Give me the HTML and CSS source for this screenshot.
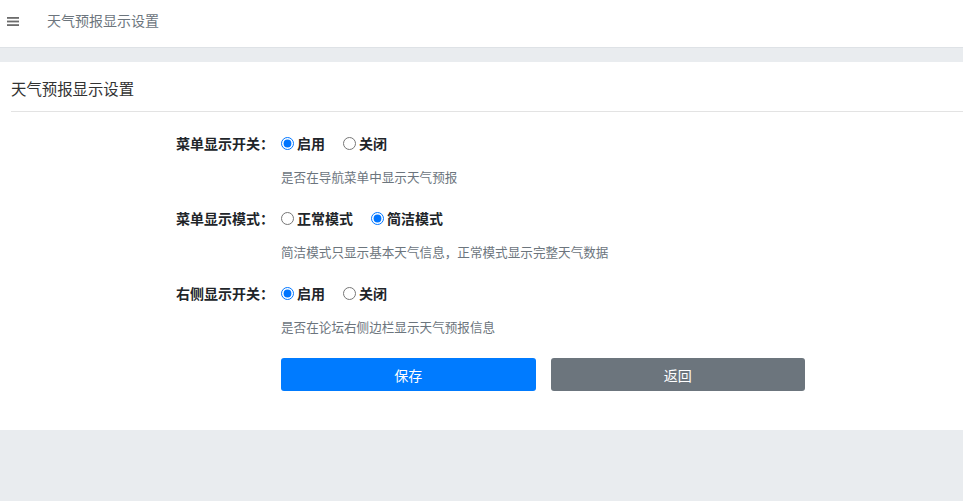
FILE: index.html
```html
<!DOCTYPE html>
<html lang="zh-CN">
<head>
    <meta charset="UTF-8">
    <meta name="viewport" content="width=device-width, initial-scale=1.0">
    <title>天气预报显示设置</title>
    <link rel="stylesheet" href="styles.css">
</head>
<body>
    <div class="top-bar">
        <span class="menu-icon">
            <svg width="12" height="9" viewBox="0 0 12 9">
                <rect x="0" y="0" width="12" height="1.8" fill="#6c6c6c"></rect>
                <rect x="0" y="3.6" width="12" height="1.8" fill="#6c6c6c"></rect>
                <rect x="0" y="7.2" width="12" height="1.8" fill="#6c6c6c"></rect>
            </svg>
        </span>
        <span class="top-title">天气预报显示设置</span>
    </div>

    <div class="card">
        <div class="card-header">天气预报显示设置</div>
        <form class="settings-form">
            <div class="form-row">
                <label class="row-label">菜单显示开关：</label>
                <div class="row-control">
                    <div class="options">
                        <label class="option"><input type="radio" name="menu_show" checked>启用</label>
                        <label class="option"><input type="radio" name="menu_show">关闭</label>
                    </div>
                    <p class="hint">是否在导航菜单中显示天气预报</p>
                </div>
            </div>
            <div class="form-row">
                <label class="row-label">菜单显示模式：</label>
                <div class="row-control">
                    <div class="options">
                        <label class="option"><input type="radio" name="menu_mode">正常模式</label>
                        <label class="option"><input type="radio" name="menu_mode" checked>简洁模式</label>
                    </div>
                    <p class="hint">简洁模式只显示基本天气信息，正常模式显示完整天气数据</p>
                </div>
            </div>
            <div class="form-row">
                <label class="row-label">右侧显示开关：</label>
                <div class="row-control">
                    <div class="options">
                        <label class="option"><input type="radio" name="side_show" checked>启用</label>
                        <label class="option"><input type="radio" name="side_show">关闭</label>
                    </div>
                    <p class="hint">是否在论坛右侧边栏显示天气预报信息</p>
                </div>
            </div>
            <div class="form-row">
                <span class="row-label"></span>
                <div class="buttons">
                    <button type="submit" class="btn btn-save">保存</button>
                    <button type="button" class="btn btn-back">返回</button>
                </div>
            </div>
        </form>
    </div>
</body>
</html>
```

FILE: styles.css
```css
* {
    margin: 0;
    padding: 0;
    box-sizing: border-box;
    font-family: "Noto Sans CJK SC", "Noto Sans", sans-serif;
}

body {
    background-color: #e9ecef;
    height: 100vh;
}

.top-bar {
    height: 48px;
    background-color: #fff;
    border-bottom: 1px solid #dee2e6;
    display: flex;
    align-items: flex-start;
    padding: 10px 0 0 7px;
    margin-bottom: 14px;
}

.menu-icon {
    display: flex;
    width: 40px;
    padding-top: 7px;
}

.top-title {
    font-size: 14px;
    color: #6c757d;
    line-height: 20px;
}

.card {
    background-color: #fff;
    padding: 0 0 39px 11px;
}

.card-header {
    font-size: 15.4px;
    color: #333;
    line-height: 20px;
    padding: 16px 0 13px;
    border-bottom: 1px solid #e3e3e3;
}

.settings-form {
    padding-top: 21px;
}

.form-row {
    display: grid;
    grid-template-columns: 263px 524px;
    column-gap: 7px;
    margin-bottom: 21px;
}

.form-row:last-child {
    margin-bottom: 0;
    margin-top: 1px;
}

.row-label {
    text-align: right;
    font-size: 14px;
    font-weight: bold;
    color: #212529;
    line-height: 20px;
}

.options {
    display: flex;
    gap: 18px;
    height: 20px;
    align-items: center;
}

.option {
    display: flex;
    align-items: center;
    font-size: 14px;
    font-weight: bold;
    color: #212529;
    line-height: 20px;
}

.option input {
    width: 13px;
    height: 13px;
    margin: 0 3px 0 0;
}

.hint {
    font-size: 12.6px;
    color: #6c757d;
    line-height: 20px;
    margin-top: 14px;
}

.buttons {
    display: flex;
    gap: 15px;
}

.btn {
    flex: 1;
    height: 33px;
    border: none;
    border-radius: 3px;
    color: #fff;
    font-size: 14px;
    cursor: pointer;
}

.btn-save {
    background-color: #007bff;
}

.btn-back {
    background-color: #6c757d;
}
```
